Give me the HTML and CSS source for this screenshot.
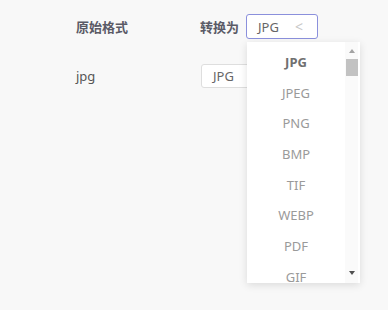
FILE: index.html
```html
<!DOCTYPE html>
<html lang="zh-CN">
<head>
  <meta charset="UTF-8" />
  <title>格式转换</title>
  <link rel="stylesheet" href="styles.css">
</head>
<body>
  <div class="convert">
    <div class="row head">
      <div class="cell">原始格式</div>
      <div class="cell target">
        <span>转换为</span>
        <div class="select active">
          <span class="value">JPG</span>
          <span class="chev">&lt;</span>

          <!-- open dropdown -->
          <div class="menu">
            <ul class="options">
              <li class="selected">JPG</li>
              <li>JPEG</li>
              <li>PNG</li>
              <li>BMP</li>
              <li>TIF</li>
              <li>WEBP</li>
              <li>PDF</li>
              <li>GIF</li>
            </ul>
            <div class="scrollbar">
              <span class="arrow up"></span>
              <span class="thumb"></span>
              <span class="spacer"></span>
              <span class="arrow down"></span>
            </div>
          </div>
        </div>
      </div>
    </div>

    <div class="row">
      <div class="cell name">jpg</div>
      <div class="cell">
        <div class="select">
          <span class="value">JPG</span>
          <span class="chev">&lt;</span>
        </div>
      </div>
    </div>
  </div>
</body>
</html>
```

FILE: styles.css
```css
html, body {
  min-height: 100vh;
}

body {
  margin: 0;
  background: #f8f8f8;
  font-family: "Noto Sans", "Noto Sans CJK SC", sans-serif;
  font-size: 13px;
  color: #555;
}

.convert {
  padding: 14px 0 0 76px;
}

.row {
  display: grid;
  grid-template-columns: 124px auto;
  align-items: center;
  height: 25px;
}

.row + .row {
  margin-top: 25px;
  height: 24px;
}

.head {
  font-weight: 700;
  color: #5a5a66;
}

.row + .row .cell:last-child {
  padding-left: 1px;
}

.target {
  display: flex;
  align-items: center;
  gap: 7px;
}

.select {
  position: relative;
  box-sizing: border-box;
  width: 72px;
  height: 24px;
  display: flex;
  align-items: center;
  justify-content: space-between;
  padding: 0 14px 0 11px;
  border: 1px solid #dedede;
  border-radius: 3px;
  background: #fff;
  font-weight: 400;
  color: #666;
}

.select.active {
  height: 25px;
  border-color: #8b90dc;
}

.chev {
  color: #c8c8c8;
  font-size: 14px;
}

.menu {
  position: absolute;
  left: 0;
  top: 27px;
  z-index: 10;
  width: 113px;
  height: 241px;
  display: flex;
  background: #fff;
  box-shadow: 0 2px 8px rgba(0, 0, 0, 0.12);
  overflow: hidden;
}

.options {
  list-style: none;
  margin: 0;
  padding: 5px 0 0;
  flex: 1;
}

.options li {
  height: 30.7px;
  line-height: 30.7px;
  text-align: center;
  color: #9a9a9a;
}

.options li.selected {
  font-weight: 700;
  color: #707070;
}

.scrollbar {
  width: 13px;
  margin-right: 2px;
  display: flex;
  flex-direction: column;
  align-items: center;
  background: #fafafa;
}

.arrow {
  width: 0;
  height: 0;
  border-left: 3.5px solid transparent;
  border-right: 3.5px solid transparent;
}

.arrow.up {
  margin-top: 7px;
  border-bottom: 4px solid #a3a3a3;
}

.arrow.down {
  margin-bottom: 8px;
  border-top: 4px solid #505050;
}

.thumb {
  margin-top: 6px;
  width: 12px;
  height: 17px;
  background: #c2c2c2;
}

.spacer {
  flex: 1;
}
```
